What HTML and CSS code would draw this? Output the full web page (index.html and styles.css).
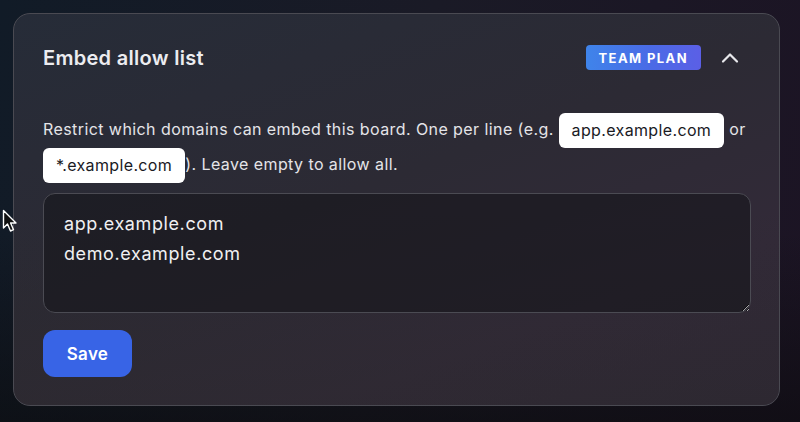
FILE: index.html
```html
<!DOCTYPE html>
<html lang="en">
<head>
<meta charset="utf-8">
<link rel="stylesheet" href="styles.css">
</head>
<body>
<section class="card">
  <header class="card-head">
    <h2 class="title">Embed allow list</h2>
    <div class="head-actions">
      <span class="badge">TEAM PLAN</span>
      <button class="collapse" aria-label="Collapse">
        <svg width="18" height="12" viewBox="0 0 18 12"><path d="M2 9.5 L9 2.5 L16 9.5" fill="none" stroke="#e8e8ec" stroke-width="2.2" stroke-linecap="round" stroke-linejoin="round"/></svg>
      </button>
    </div>
  </header>
  <p class="desc">Restrict which domains can embed this board. One per line (e.g. <code class="chip">app.example.com</code> or <code class="chip">*.example.com</code>). Leave empty to allow all.</p>
  <textarea class="domains" spellcheck="false">app.example.com
demo.example.com</textarea>
  <div class="actions"><button class="save">Save</button></div>
</section>
<svg class="cursor" width="16" height="26" viewBox="0 0 16 26"><path d="M1.5 1.5 L1.5 19 L5.5 15 L8.5 22 L11.5 20.7 L8.6 14 L14 14 Z" fill="#111" stroke="#fff" stroke-width="1.4" stroke-linejoin="round"/></svg>
</body>
</html>
```
FILE: styles.css
```css
html, body {
  margin: 0;
  height: 100%;
}
body {
  width: 800px;
  height: 422px;
  overflow: hidden;
  position: relative;
  font-family: Inter, "Noto Sans", sans-serif;
  background:
    linear-gradient(180deg, rgba(0,0,0,0) 55%, rgba(10,10,12,0.6) 100%),
    linear-gradient(100deg, #111b27 0%, #1a1a26 50%, #1c1424 100%);
  padding: 13px 0 0 13px;
  box-sizing: border-box;
}
.card {
  width: 767px;
  height: 393px;
  box-sizing: border-box;
  border: 1px solid #4a4a52;
  border-radius: 17px;
  background:
    linear-gradient(160deg, rgba(38,44,56,1) 0%, rgba(44,42,52,1) 45%, rgba(50,42,56,1) 75%, rgba(48,40,54,1) 100%);
  padding: 31px 30px 28px 29px;
  display: flex;
  flex-direction: column;
  position: relative;
  overflow: hidden;
}
.card::after {
  content: "";
  position: absolute;
  inset: 0;
  background: linear-gradient(180deg, rgba(0,0,0,0) 50%, rgba(40,40,40,0.35) 100%);
  pointer-events: none;
}
.card > * { position: relative; z-index: 1; }
.card-head {
  display: flex;
  align-items: center;
  justify-content: space-between;
  height: 26px;
}
.title {
  margin: 0;
  font-size: 20px;
  font-weight: 600;
  color: #ececf0;
  letter-spacing: 0.3px;
}
.head-actions {
  display: flex;
  align-items: center;
  gap: 20px;
}
.badge {
  display: inline-flex;
  align-items: center;
  height: 25px;
  padding: 0 13px 0 13px;
  border-radius: 4px;
  background: linear-gradient(90deg, #3f84ea 0%, #4a6be6 55%, #5b5fe6 100%);
  color: #fff;
  font-size: 13px;
  font-weight: 700;
  letter-spacing: 1.4px;
}
.collapse {
  background: none;
  border: 0;
  padding: 0;
  margin-right: 10px;
  width: 18px;
  height: 12px;
  display: flex;
}
.desc {
  margin: 41px 0 0 0;
  font-size: 16px;
  letter-spacing: 0.42px;
  line-height: 34px;
  color: #e4e4e8;
}
.chip {
  display: inline-block;
  font-family: Inter, "Noto Sans", sans-serif;
  font-size: 16px;
  letter-spacing: 0.36px;
  line-height: 35px;
  height: 35px;
  padding: 0 13px;
  background: #ffffff;
  color: #1a1a1f;
  border-radius: 6px;
  vertical-align: middle;
  margin: -1px 0;
}
.domains {
  margin-top: 11px;
  height: 120px;
  box-sizing: border-box;
  width: 708px;
  resize: vertical;
  background: rgba(22,22,26,0.6);
  border: 1px solid #4b4b53;
  border-radius: 12px;
  color: #f0f0f2;
  font-family: Inter, "Noto Sans", sans-serif;
  font-size: 18px;
  letter-spacing: 0.6px;
  line-height: 30px;
  padding: 15px 20px;
  outline: none;
}
.actions {
  margin-top: 17px;
  display: flex;
}
.save {
  width: 89px;
  height: 47px;
  border: 0;
  border-radius: 12px;
  background: #3864e6;
  color: #ffffff;
  font-family: Inter, "Noto Sans", sans-serif;
  font-size: 17px;
  font-weight: 600;
  letter-spacing: 0.3px;
}
.cursor {
  position: absolute;
  left: 2px;
  top: 209px;
}
```
